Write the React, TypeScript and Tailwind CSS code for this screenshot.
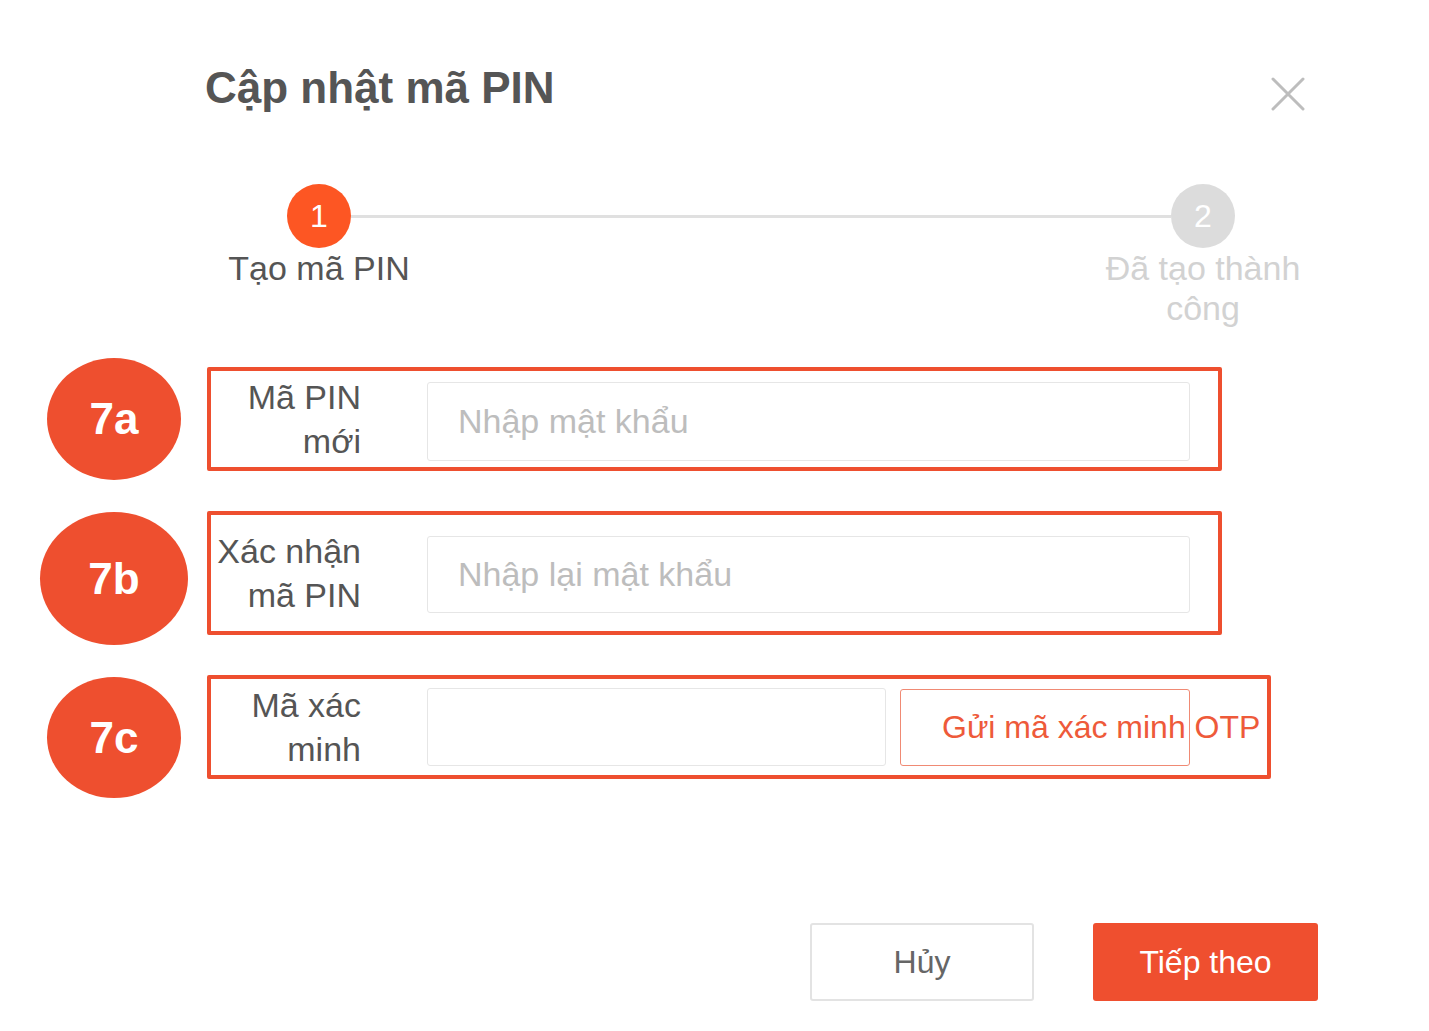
import React from 'react';

const font = "font-['Liberation_Sans',Arial,sans-serif]";

function Badge({ label, className }: { label: string; className: string }) {
  return (
    <div className="w-[148px] flex justify-center shrink-0">
      <div className={`rounded-[50%] bg-[#ee4f2f] flex items-center justify-center text-white font-bold text-[44px] ${className}`}>
        {label}
      </div>
    </div>
  );
}

function FieldLabel({ lines }: { lines: string[] }) {
  return (
    <div className="w-[150px] shrink-0 text-right text-[34px] leading-[44px] text-[#555]">
      {lines.map((l) => (
        <div key={l}>{l}</div>
      ))}
    </div>
  );
}

function TextInput({ placeholder, className = '' }: { placeholder?: string; className?: string }) {
  return (
    <div className={`border border-[#e6e6e6] rounded-[3px] flex items-center pl-[30px] text-[34px] text-[#bdbdbd] ${className}`}>
      {placeholder}
    </div>
  );
}

export default function App() {
  return (
    <div className={`w-[1429px] h-[1031px] bg-white overflow-hidden ${font}`}>
      {/* header */}
      <div className="flex justify-between items-start pt-[62px] pl-[205px] pr-[124px]">
        <h1 className="text-[44px] leading-[52px] font-bold text-[#555]">Cập nhật mã PIN</h1>
        <svg className="mt-[15px]" width="34" height="34" viewBox="0 0 34 34">
          <path d="M2 2 L32 32 M32 2 L2 32" stroke="#bdbdbd" strokeWidth="3" strokeLinecap="round" />
        </svg>
      </div>

      {/* steps */}
      <div className="flex items-start ml-[219px] w-[1084px] mt-[70px]">
        <div className="w-[200px] shrink-0 flex flex-col items-center">
          <div className="w-[64px] h-[64px] rounded-full bg-[#fd5623] text-white text-[32px] flex items-center justify-center">1</div>
          <div className="text-[34px] leading-[40px] text-[#555] text-center">Tạo mã PIN</div>
        </div>
        <div className="flex-1 h-[3px] bg-[#e0e0e0] mt-[31px] mx-[-68px]"></div>
        <div className="w-[200px] shrink-0 flex flex-col items-center">
          <div className="w-[64px] h-[64px] rounded-full bg-[#dcdcdc] text-white text-[32px] flex items-center justify-center">2</div>
          <div className="text-[34px] leading-[40px] text-[#d2d2d2] text-center">Đã tạo thành công</div>
        </div>
      </div>

      {/* form rows */}
      <div className="pl-[40px] mt-[30px] flex flex-col">
        <div className="flex items-start gap-[19px]">
          <Badge label="7a" className="w-[134px] h-[122px]" />
          <div className="mt-[9px] w-[1015px] h-[104px] border-4 border-[#ee4f2f] rounded-[2px] flex items-center">
            <FieldLabel lines={['Mã PIN', 'mới']} />
            <TextInput placeholder="Nhập mật khẩu" className="ml-[66px] w-[763px] h-[79px] mt-[5px]" />
          </div>
        </div>

        <div className="flex items-start gap-[19px] mt-[31px]">
          <Badge label="7b" className="w-[148px] h-[133px] mt-[1px]" />
          <div className="w-[1015px] h-[124px] border-4 border-[#ee4f2f] rounded-[2px] flex items-center">
            <FieldLabel lines={['Xác nhận', 'mã PIN']} />
            <TextInput placeholder="Nhập lại mật khẩu" className="ml-[66px] w-[763px] h-[77px] mt-[3px]" />
          </div>
        </div>

        <div className="flex items-start gap-[19px] mt-[30px]">
          <Badge label="7c" className="w-[134px] h-[121px] mt-[2px]" />
          <div className="w-[1064px] h-[104px] border-4 border-[#ee4f2f] rounded-[2px] flex items-center">
            <FieldLabel lines={['Mã xác', 'minh']} />
            <TextInput className="ml-[66px] w-[459px] h-[78px]" />
            <button className="ml-[14px] w-[290px] h-[77px] border border-[#f08a74] rounded-[3px] flex items-center pl-[41px] whitespace-nowrap overflow-visible text-[32px] text-[#ee5a3a]">
              Gửi mã xác minh OTP
            </button>
          </div>
        </div>
      </div>

      {/* footer */}
      <div className="flex justify-end gap-[59px] pr-[111px] mt-[125px]">
        <button className="w-[224px] h-[78px] border-2 border-[#e3e3e3] rounded-[3px] bg-white text-[32px] text-[#666]">Hủy</button>
        <button className="w-[225px] h-[78px] rounded-[3px] bg-[#ef4f2f] text-[32px] text-white">Tiếp theo</button>
      </div>
    </div>
  );
}
